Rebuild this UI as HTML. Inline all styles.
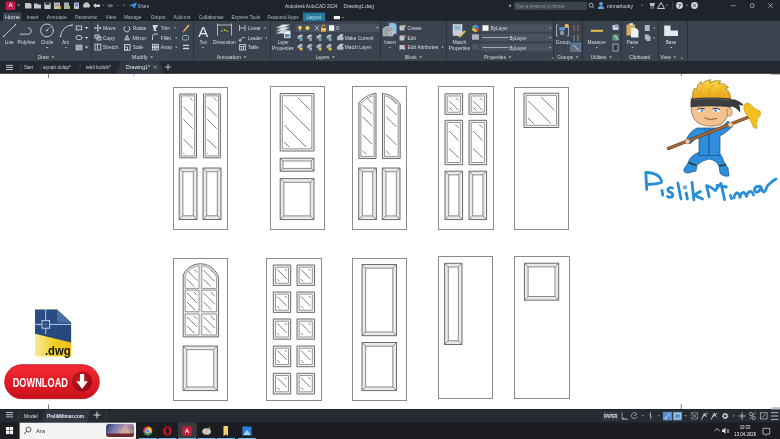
<!DOCTYPE html>
<html><head><meta charset="utf-8">
<style>
html,body{margin:0;padding:0;width:780px;height:439px;overflow:hidden;background:#fff}
svg{display:block;font-family:'Liberation Sans',sans-serif;will-change:transform}
</style></head><body>
<svg width="780" height="439" viewBox="0 0 780 439" style="font-family:'Liberation Sans',sans-serif">
<rect x="0" y="0" width="780" height="21" fill="#1f232a" stroke="none" stroke-width="1" />
<rect x="0" y="21" width="780" height="40" fill="#3b4350" stroke="none" stroke-width="1" />
<rect x="0" y="61" width="780" height="13" fill="#242930" stroke="none" stroke-width="1" />
<rect x="0" y="72" width="780" height="2" fill="#1d2026" stroke="none" stroke-width="1" />
<rect x="0" y="73.8" width="780" height="335.2" fill="#ffffff" stroke="none" stroke-width="1" />
<rect x="0" y="409" width="780" height="14" fill="#262a31" stroke="none" stroke-width="1" />
<rect x="0" y="409" width="780" height="1" fill="#1f232a" stroke="none" stroke-width="1" />
<rect x="0" y="422.5" width="780" height="16.5" fill="#1c1d20" stroke="none" stroke-width="1" />
<rect x="5.6" y="1.3" width="9.8" height="8.7" fill="#c01a4a" stroke="none" stroke-width="1" rx="0.8"/>
<text x="10.6" y="7.4" font-size="6" fill="#f6f0f2" text-anchor="middle" font-weight="bold" >A</text>
<path d="M17.400000000000002 4.48 L19.8 4.48 L18.6 6.04 Z" fill="#c9cdd3"/>
<path d="M25 3 H30 L31.5 4.5 V8.5 H25 Z" fill="#c3c8cf"/>
<path d="M34 3.5 H37 L38 4.5 H41 V8.5 H34 Z" fill="#c3c8cf"/>
<rect x="44.3" y="2.6" width="6.4" height="6.4" fill="#c3c8cf"/><rect x="45.5" y="2.6" width="4" height="2.2" fill="#2a2f36"/>
<rect x="54" y="2.6" width="6" height="6.4" fill="#c3c8cf"/><path d="M55 4.3 H59 M55 5.8 H59" stroke="#555" stroke-width="0.5"/><rect x="58" y="6.5" width="3" height="2.5" fill="#e0b040"/>
<rect x="64" y="2.5" width="5" height="6.5" fill="#a9afb7"/><rect x="66.5" y="6" width="3.5" height="3" fill="#9ac050"/>
<rect x="74" y="2.4" width="5" height="6.6" rx="0.8" fill="#c3c8cf"/><rect x="75" y="3.5" width="3" height="3" fill="#5590d0"/>
<rect x="83.2" y="3.8" width="6.7" height="3.6" rx="1.2" fill="#c3c8cf"/><rect x="84.5" y="2.5" width="4" height="1.8" fill="#c3c8cf"/>
<path d="M93 5.5 L96 3.2 V4.6 H100 V7 H96 V8 Z" fill="#c3c8cf"/>
<path d="M102.2 4.92 L103.8 4.92 L103 5.96 Z" fill="#aab0b8"/>
<path d="M113.5 5.5 L110.5 3.2 V4.6 H107.5 V7 H110.5 V8 Z" fill="#5f6670"/>
<path d="M117.2 4.92 L118.8 4.92 L118 5.96 Z" fill="#6a7078"/>
<path d="M123.0 4.800000000000001 L125.0 4.800000000000001 L124 6.1000000000000005 Z" fill="#aab0b8"/>
<path d="M129 5.5 L137 2.3 L134.5 9 L133 6.5 Z" fill="#3e8fe0"/>
<text x="137.5" y="7.6" font-size="5.8" fill="#a9bcd6" text-anchor="start" font-weight="normal" textLength="11.8" lengthAdjust="spacingAndGlyphs" >Share</text>
<text x="285" y="7.6" font-size="5.6" fill="#d2d5da" text-anchor="start" font-weight="normal" textLength="52.5" lengthAdjust="spacingAndGlyphs" >Autodesk AutoCAD 2024</text>
<text x="343.5" y="7.6" font-size="5.6" fill="#d2d5da" text-anchor="start" font-weight="normal" textLength="30.5" lengthAdjust="spacingAndGlyphs" >Drawing1.dwg</text>
<path d="M509.5 4 L511.5 5.7 L509.5 7.4 Z" fill="#bbb"/>
<rect x="514" y="1.8" width="73" height="8.2" fill="#3c434e" stroke="none" stroke-width="1" />
<text x="515.5" y="7.7" font-size="5.4" fill="#8e959f" text-anchor="start" font-weight="normal" textLength="49" lengthAdjust="spacingAndGlyphs" font-style="italic">Type a keyword or phrase</text>
<circle cx="591" cy="5.2" r="2" fill="none" stroke="#c3c8cf" stroke-width="0.8"/><path d="M592.5 6.7 L594 8.3" stroke="#c3c8cf" stroke-width="0.9"/>
<circle cx="601" cy="3.8" r="1.9" fill="#5fa0e0"/><path d="M597.8 9 A3.2 3 0 0 1 604.2 9 Z" fill="#5fa0e0"/>
<text x="607" y="7.6" font-size="5.6" fill="#d9dde3" text-anchor="start" font-weight="normal" textLength="26" lengthAdjust="spacingAndGlyphs" >mimarlucky</text>
<path d="M641.1 4.76 L642.9 4.76 L642 5.93 Z" fill="#c3c8cf"/>
<path d="M649.5 3 H655 L654 6.5 H650.5 Z" fill="#b9bfc7"/><circle cx="651" cy="8" r="0.7" fill="#b9bfc7"/><circle cx="653.5" cy="8" r="0.7" fill="#b9bfc7"/>
<path d="M661 2.5 L664.5 8.5 H657.5 Z" fill="none" stroke="#c3c8cf" stroke-width="1"/>
<path d="M666.1 4.76 L667.9 4.76 L667 5.93 Z" fill="#c3c8cf"/>
<rect x="672" y="2" width="0.7" height="7.5" fill="#4a5059" stroke="none" stroke-width="1" />
<circle cx="679.5" cy="5.5" r="3.4" fill="#d2d6db"/><text x="679.5" y="7.6" font-size="5" fill="#2a2e35" text-anchor="middle" font-weight="bold">?</text>
<path d="M686.1 4.76 L687.9 4.76 L687 5.93 Z" fill="#c3c8cf"/>
<circle cx="694.5" cy="5.5" r="3.4" fill="#d2d6db"/><rect x="693" y="4" width="3" height="3" fill="#8a9099"/>
<line x1="731" y1="5.7" x2="735.8" y2="5.7" stroke="#c9cdd3" stroke-width="0.6" />
<rect x="750.5" y="3.8" width="3.4" height="3.6" fill="none" stroke="#c9cdd3" stroke-width="0.7" rx="0.8"/>
<path d="M768.3 3.3 L772.9 7.9 M772.9 3.3 L768.3 7.9" stroke="#c9cdd3" stroke-width="0.65"/>
<path d="M3 21 V13 Q3 12.5 3.5 12.5 H21 Q21.5 12.5 21.5 13 V21 Z" fill="#3b4350"/>
<text x="5" y="19.1" font-size="5.8" fill="#e6e9ed" text-anchor="start" font-weight="normal" textLength="15" lengthAdjust="spacingAndGlyphs" >Home</text>
<text x="26.7" y="19.1" font-size="5.8" fill="#b6bcc4" text-anchor="start" font-weight="normal" textLength="11.9" lengthAdjust="spacingAndGlyphs" >Insert</text>
<text x="46.8" y="19.1" font-size="5.8" fill="#b6bcc4" text-anchor="start" font-weight="normal" textLength="19.9" lengthAdjust="spacingAndGlyphs" >Annotate</text>
<text x="74.9" y="19.1" font-size="5.8" fill="#b6bcc4" text-anchor="start" font-weight="normal" textLength="22.5" lengthAdjust="spacingAndGlyphs" >Parametric</text>
<text x="105.6" y="19.1" font-size="5.8" fill="#b6bcc4" text-anchor="start" font-weight="normal" textLength="10.3" lengthAdjust="spacingAndGlyphs" >View</text>
<text x="124" y="19.1" font-size="5.8" fill="#b6bcc4" text-anchor="start" font-weight="normal" textLength="17.5" lengthAdjust="spacingAndGlyphs" >Manage</text>
<text x="150.8" y="19.1" font-size="5.8" fill="#b6bcc4" text-anchor="start" font-weight="normal" textLength="14.7" lengthAdjust="spacingAndGlyphs" >Output</text>
<text x="173.6" y="19.1" font-size="5.8" fill="#b6bcc4" text-anchor="start" font-weight="normal" textLength="16.9" lengthAdjust="spacingAndGlyphs" >Add-ins</text>
<text x="198.7" y="19.1" font-size="5.8" fill="#b6bcc4" text-anchor="start" font-weight="normal" textLength="25.1" lengthAdjust="spacingAndGlyphs" >Collaborate</text>
<text x="231.5" y="19.1" font-size="5.8" fill="#b6bcc4" text-anchor="start" font-weight="normal" textLength="28.8" lengthAdjust="spacingAndGlyphs" >Express Tools</text>
<text x="267.4" y="19.1" font-size="5.8" fill="#b6bcc4" text-anchor="start" font-weight="normal" textLength="31.3" lengthAdjust="spacingAndGlyphs" >Featured Apps</text>
<rect x="303" y="12.8" width="22" height="8.2" fill="#2a7aa0" stroke="#1d5f80" stroke-width="0.6" />
<text x="306.7" y="19.1" font-size="5.8" fill="#cde6f2" text-anchor="start" font-weight="normal" textLength="14.3" lengthAdjust="spacingAndGlyphs" >Layout</text>
<rect x="333.8" y="16" width="6.2" height="3.2" fill="#f0f2f4" stroke="none" stroke-width="1" />
<path d="M342.1 17.060000000000002 L343.9 17.060000000000002 L343 18.23 Z" fill="#c3c8cf"/>
<path d="M6 65.4 H13 M6 67.4 H13 M6 69.5 H13" stroke="#d0d4da" stroke-width="0.9"/>
<path d="M117 73 L121.5 61.2 H160 L163 73 Z" fill="#333944"/>
<line x1="22" y1="63.5" x2="20" y2="71" stroke="#4a515b" stroke-width="0.6" />
<line x1="42" y1="63.5" x2="40" y2="71" stroke="#4a515b" stroke-width="0.6" />
<line x1="81" y1="63.5" x2="79" y2="71" stroke="#4a515b" stroke-width="0.6" />
<text x="24" y="69.3" font-size="5.6" fill="#cdd1d7" text-anchor="start" font-weight="normal" textLength="9" lengthAdjust="spacingAndGlyphs" >Start</text>
<text x="43" y="69.3" font-size="5.6" fill="#cdd1d7" text-anchor="start" font-weight="normal" textLength="28" lengthAdjust="spacingAndGlyphs" >aynalı dolap*</text>
<text x="86" y="69.3" font-size="5.6" fill="#cdd1d7" text-anchor="start" font-weight="normal" textLength="25" lengthAdjust="spacingAndGlyphs" >tekli koltuk*</text>
<text x="126" y="69.3" font-size="5.6" fill="#e8ebef" text-anchor="start" font-weight="normal" textLength="24" lengthAdjust="spacingAndGlyphs" >Drawing1*</text>
<path d="M153.5 65.5 L157 69 M157 65.5 L153.5 69" stroke="#aab0b8" stroke-width="0.7"/>
<path d="M168 63.8 V70.2 M164.8 67 H171.2" stroke="#d8dce1" stroke-width="0.8"/>
<rect x="91" y="21" width="1" height="40" fill="#2b3039" stroke="none" stroke-width="1" />
<rect x="193" y="21" width="1" height="40" fill="#2b3039" stroke="none" stroke-width="1" />
<rect x="270" y="21" width="1" height="40" fill="#2b3039" stroke="none" stroke-width="1" />
<rect x="380" y="21" width="1" height="40" fill="#2b3039" stroke="none" stroke-width="1" />
<rect x="446" y="21" width="1" height="40" fill="#2b3039" stroke="none" stroke-width="1" />
<rect x="553" y="21" width="1" height="40" fill="#2b3039" stroke="none" stroke-width="1" />
<rect x="582" y="21" width="1" height="40" fill="#2b3039" stroke="none" stroke-width="1" />
<rect x="621" y="21" width="1" height="40" fill="#2b3039" stroke="none" stroke-width="1" />
<rect x="658" y="21" width="1" height="40" fill="#2b3039" stroke="none" stroke-width="1" />
<rect x="687" y="21" width="1" height="40" fill="#2b3039" stroke="none" stroke-width="1" />
<g stroke="#cfd4da" stroke-width="0.9" fill="none" stroke-linecap="round">
<line x1="3.5" y1="36.5" x2="15.5" y2="24.8"/>
<path d="M20 34.2 L29 34.2 A3.3 3.3 0 0 0 28.5 27.8"/>
<circle cx="47" cy="30.4" r="6.4"/>
<path d="M60.5 36.5 A12 12 0 0 1 72 25"/>
<rect x="76.2" y="26" width="5.4" height="3.8"/>
<ellipse cx="79" cy="37.6" rx="3" ry="2.2"/>
</g>
<line x1="47" y1="30.4" x2="50.6" y2="26.8" stroke="#7fb0d8" stroke-width="0.9"/>
<circle cx="3.5" cy="36.5" r="0.8" fill="#cfd4da"/>
<circle cx="15.5" cy="24.8" r="0.8" fill="#cfd4da"/>
<circle cx="60.5" cy="36.5" r="0.8" fill="#cfd4da"/>
<circle cx="72" cy="25" r="0.8" fill="#cfd4da"/>
<circle cx="47" cy="30.4" r="0.8" fill="#cfd4da"/>
<rect x="76" y="45" width="6" height="5" fill="#9aa2ac" stroke="#cfd4da" stroke-width="0.6" />
<path d="M84.9 27.04 L88.1 27.04 L86.5 29.12 Z" fill="#d9dde3"/>
<path d="M84.9 37.04 L88.1 37.04 L86.5 39.12 Z" fill="#d9dde3"/>
<path d="M84.9 46.54 L88.1 46.54 L86.5 48.62 Z" fill="#d9dde3"/>
<text x="4.7" y="44.216" font-size="5.6" fill="#d9dde3" text-anchor="start" font-weight="normal" textLength="9.0" lengthAdjust="spacingAndGlyphs" >Line</text>
<text x="17.5" y="44.216" font-size="5.6" fill="#d9dde3" text-anchor="start" font-weight="normal" textLength="17.8" lengthAdjust="spacingAndGlyphs" >Polyline</text>
<text x="40.8" y="44.216" font-size="5.6" fill="#d9dde3" text-anchor="start" font-weight="normal" textLength="12.5" lengthAdjust="spacingAndGlyphs" >Circle</text>
<text x="62" y="44.216" font-size="5.6" fill="#d9dde3" text-anchor="start" font-weight="normal" textLength="7.2" lengthAdjust="spacingAndGlyphs" >Arc</text>
<path d="M46.0 46.9 L48.0 46.9 L47 48.2 Z" fill="#d9dde3"/>
<path d="M65.0 46.9 L67.0 46.9 L66 48.2 Z" fill="#d9dde3"/>
<text x="38" y="59.216" font-size="5.6" fill="#d9dde3" text-anchor="start" font-weight="normal" textLength="10.7" lengthAdjust="spacingAndGlyphs" >Draw</text>
<path d="M51.7 56.42 L54.3 56.42 L53 58.11 Z" fill="#d9dde3"/>
<g stroke="#cfd4da" stroke-width="0.9" fill="none">
<path d="M97.8 25 V31 M94.8 28 H100.8"/>
<path d="M97.8 24.3 L96.6 25.8 H99 Z M97.8 31.7 L96.6 30.2 H99 Z M94.1 28 L95.6 26.8 V29.2 Z M101.5 28 L100 26.8 V29.2 Z" fill="#cfd4da" stroke="none"/>
<rect x="95" y="35" width="4" height="3"/><rect x="97" y="37" width="4" height="3"/>
<rect x="95" y="44.2" width="5.8" height="5.8"/><line x1="97.5" y1="44.5" x2="97.5" y2="49"/>
<path d="M128.5 26.3 A3 3 0 1 1 125 26.5"/>
<rect x="124.5" y="44.5" width="5.6" height="5.6"/><rect x="124.5" y="47" width="3" height="3"/>
<path d="M152.5 40 V36.5 A2.5 2.5 0 0 1 155 34 H158"/>
<rect x="152.5" y="44.3" width="2.4" height="2.4"/><rect x="156" y="44.3" width="2.4" height="2.4"/><rect x="152.5" y="47.5" width="2.4" height="2.4"/><rect x="156" y="47.5" width="2.4" height="2.4"/>
</g>
<path d="M124.5 40 L127 35 L129.5 40 Z" fill="#6d9fc4" stroke="#cfd4da" stroke-width="0.6"/>
<path d="M152.5 25 L158.5 25 L155.5 29 L157 31 L154 31 Z" fill="#cfd4da"/>
<path d="M183 32 L189 25" stroke="#e8b86a" stroke-width="1.6"/><path d="M183 32 L184.3 30.5" stroke="#d05050" stroke-width="1.6"/>
<rect x="182.5" y="35.5" width="6" height="4.5" rx="1.2" fill="none" stroke="#8fb0b8" stroke-width="1"/>
<path d="M183.5 45.3 H188.5 M183.5 48.5 H188.5" stroke="#cfd4da" stroke-width="1.3" stroke-linecap="round"/>
<text x="103" y="30.016" font-size="5.6" fill="#d9dde3" text-anchor="start" font-weight="normal" textLength="12.5" lengthAdjust="spacingAndGlyphs" >Move</text>
<text x="102.8" y="40.016" font-size="5.6" fill="#d9dde3" text-anchor="start" font-weight="normal" textLength="11.9" lengthAdjust="spacingAndGlyphs" >Copy</text>
<text x="102.8" y="49.416" font-size="5.6" fill="#d9dde3" text-anchor="start" font-weight="normal" textLength="15.5" lengthAdjust="spacingAndGlyphs" >Stretch</text>
<text x="133" y="30.016" font-size="5.6" fill="#d9dde3" text-anchor="start" font-weight="normal" textLength="13.3" lengthAdjust="spacingAndGlyphs" >Rotate</text>
<text x="132.5" y="40.016" font-size="5.6" fill="#d9dde3" text-anchor="start" font-weight="normal" textLength="13.8" lengthAdjust="spacingAndGlyphs" >Mirror</text>
<text x="133" y="49.416" font-size="5.6" fill="#d9dde3" text-anchor="start" font-weight="normal" textLength="10.3" lengthAdjust="spacingAndGlyphs" >Scale</text>
<text x="160.8" y="30.016" font-size="5.6" fill="#d9dde3" text-anchor="start" font-weight="normal" textLength="9.2" lengthAdjust="spacingAndGlyphs" >Trim</text>
<text x="160.8" y="40.016" font-size="5.6" fill="#d9dde3" text-anchor="start" font-weight="normal" textLength="10.0" lengthAdjust="spacingAndGlyphs" >Fillet</text>
<text x="160.8" y="49.416" font-size="5.6" fill="#d9dde3" text-anchor="start" font-weight="normal" textLength="11.2" lengthAdjust="spacingAndGlyphs" >Array</text>
<path d="M174.0 27.4 L176.0 27.4 L175 28.7 Z" fill="#d9dde3"/>
<path d="M175.3 37.4 L177.3 37.4 L176.3 38.7 Z" fill="#d9dde3"/>
<path d="M175.3 46.8 L177.3 46.8 L176.3 48.1 Z" fill="#d9dde3"/>
<text x="132" y="59.216" font-size="5.6" fill="#d9dde3" text-anchor="start" font-weight="normal" textLength="15.5" lengthAdjust="spacingAndGlyphs" >Modify</text>
<path d="M150.39999999999998 56.42 L153.0 56.42 L151.7 58.11 Z" fill="#d9dde3"/>
<text x="203.3" y="37" font-size="15" fill="#e6e9ed" text-anchor="middle" font-weight="normal" textLength="10" lengthAdjust="spacingAndGlyphs" >A</text>
<text x="199.7" y="44.216" font-size="5.6" fill="#d9dde3" text-anchor="start" font-weight="normal" textLength="7.0" lengthAdjust="spacingAndGlyphs" >Text</text>
<path d="M202.0 46.9 L204.0 46.9 L203 48.2 Z" fill="#d9dde3"/>
<g stroke="#cfd4da" stroke-width="0.8" fill="none"><path d="M217.5 23.5 V35.5 M231.5 23.5 V35.5 M217.5 25 H231.5"/></g>
<path d="M221 32 L223 30 M224.5 29 V31 M228 32 L226 30" stroke="#e0d040" stroke-width="0.9"/>
<text x="213" y="44.216" font-size="5.6" fill="#d9dde3" text-anchor="start" font-weight="normal" textLength="22.8" lengthAdjust="spacingAndGlyphs" >Dimension</text>
<g stroke="#cfd4da" stroke-width="0.8" fill="none"><path d="M239.5 25 V31 M245 25 V31 M239.5 28 H245"/><path d="M239.5 41 L242.5 37.5 H245"/><circle cx="240" cy="40.5" r="1"/><rect x="239.5" y="44.5" width="6" height="5.5"/><path d="M239.5 46.3 H245.5 M241.5 46.3 V50 M243.5 46.3 V50"/></g>
<text x="248" y="30.016" font-size="5.6" fill="#d9dde3" text-anchor="start" font-weight="normal" textLength="12.8" lengthAdjust="spacingAndGlyphs" >Linear</text>
<text x="248" y="40.016" font-size="5.6" fill="#d9dde3" text-anchor="start" font-weight="normal" textLength="14" lengthAdjust="spacingAndGlyphs" >Leader</text>
<text x="248" y="49.416" font-size="5.6" fill="#d9dde3" text-anchor="start" font-weight="normal" textLength="10.8" lengthAdjust="spacingAndGlyphs" >Table</text>
<path d="M264.0 27.4 L266.0 27.4 L265 28.7 Z" fill="#d9dde3"/>
<path d="M265.3 37.4 L267.3 37.4 L266.3 38.7 Z" fill="#d9dde3"/>
<text x="216.7" y="59.216" font-size="5.6" fill="#d9dde3" text-anchor="start" font-weight="normal" textLength="24.1" lengthAdjust="spacingAndGlyphs" >Annotation</text>
<path d="M243.7 56.42 L246.3 56.42 L245 58.11 Z" fill="#d9dde3"/>
<g stroke="#8a939d" stroke-width="0.5">
<path d="M276 28.0 L282.5 24.5 L290 24.5 L283.5 28.0 Z" fill="#e4e8ec"/>
<path d="M276 30.8 L282.5 27.3 L290 27.3 L283.5 30.8 Z" fill="#e4e8ec"/>
<path d="M276 33.6 L282.5 30.1 L290 30.1 L283.5 33.6 Z" fill="#e4e8ec"/>
</g>
<rect x="284" y="31" width="6.5" height="7" fill="#eef1f4" stroke="#7f8a96" stroke-width="0.5" />
<rect x="285" y="34.2" width="4.5" height="2.8" fill="#4a86c0" stroke="none" stroke-width="1" />
<text x="277.8" y="44.216" font-size="5.6" fill="#d9dde3" text-anchor="start" font-weight="normal" textLength="10.9" lengthAdjust="spacingAndGlyphs" >Layer</text>
<text x="272" y="50.315999999999995" font-size="5.6" fill="#d9dde3" text-anchor="start" font-weight="normal" textLength="21.7" lengthAdjust="spacingAndGlyphs" >Properties</text>
<rect x="295.8" y="24" width="83.5" height="8" fill="#4a525f" stroke="none" stroke-width="1" />
<circle cx="300" cy="27.5" r="1.8" fill="#f0d050"/><rect x="299.2" y="29" width="1.6" height="1.6" fill="#c0c0b0"/>
<circle cx="307.5" cy="28" r="2" fill="#f3d55a"/>
<path d="M315 25.5 L319 30.5 M319 25.5 L315 30.5" stroke="#b9c0c8" stroke-width="0.9"/>
<rect x="321" y="28" width="5" height="3.6" fill="#f0c040" stroke="none" stroke-width="1" />
<path d="M322 28 V26.5 A1.5 1.5 0 0 1 325 26.5" stroke="#f0c040" stroke-width="0.8" fill="none"/>
<rect x="329" y="25.3" width="5.2" height="5.5" fill="#f4f6f8" stroke="none" stroke-width="1" />
<text x="336" y="30.2" font-size="5.6" fill="#d9dde3" text-anchor="start" font-weight="normal" >0</text>
<path d="M376.4 27.34 L378.6 27.34 L377.5 28.77 Z" fill="#d9dde3"/>
<path d="M296.8 37.0 L300.3 34.5 L303.2 35.0 L299.7 37.5 Z" fill="#c5ccd4"/>
<path d="M296.8 38.5 L300.3 36.0 L303.2 36.5 L299.7 39.0 Z" fill="#9aa4ae"/>
<rect x="299.7" y="38.1" width="2.8" height="2.8" fill="#5fb0b8"/>
<path d="M306.3 37.0 L309.8 34.5 L312.7 35.0 L309.2 37.5 Z" fill="#c5ccd4"/>
<path d="M306.3 38.5 L309.8 36.0 L312.7 36.5 L309.2 39.0 Z" fill="#9aa4ae"/>
<rect x="309.2" y="38.1" width="2.8" height="2.8" fill="#8fa0b0"/>
<path d="M315.8 37.0 L319.3 34.5 L322.2 35.0 L318.7 37.5 Z" fill="#c5ccd4"/>
<path d="M315.8 38.5 L319.3 36.0 L322.2 36.5 L318.7 39.0 Z" fill="#9aa4ae"/>
<rect x="318.7" y="38.1" width="2.8" height="2.8" fill="#5fb0a0"/>
<path d="M325.8 37.0 L329.3 34.5 L332.2 35.0 L328.7 37.5 Z" fill="#c5ccd4"/>
<path d="M325.8 38.5 L329.3 36.0 L332.2 36.5 L328.7 39.0 Z" fill="#9aa4ae"/>
<rect x="328.7" y="38.1" width="2.8" height="2.8" fill="#70b8c0"/>
<path d="M337 37.0 L341 34.0 L344 34.7 L340 38.0 Z" fill="#c5ccd4"/>
<rect x="337" y="36.7" width="6.5" height="3.6" rx="0.8" fill="#b0b8c2"/>
<path d="M296.8 46.5 L300.3 44 L303.2 44.5 L299.7 47 Z" fill="#c5ccd4"/>
<path d="M296.8 48 L300.3 45.5 L303.2 46 L299.7 48.5 Z" fill="#9aa4ae"/>
<rect x="299.7" y="47.6" width="2.8" height="2.8" fill="#f0c050"/>
<path d="M306.3 46.5 L309.8 44 L312.7 44.5 L309.2 47 Z" fill="#c5ccd4"/>
<path d="M306.3 48 L309.8 45.5 L312.7 46 L309.2 48.5 Z" fill="#9aa4ae"/>
<rect x="309.2" y="47.6" width="2.8" height="2.8" fill="#9aa6b2"/>
<path d="M315.8 46.5 L319.3 44 L322.2 44.5 L318.7 47 Z" fill="#c5ccd4"/>
<path d="M315.8 48 L319.3 45.5 L322.2 46 L318.7 48.5 Z" fill="#9aa4ae"/>
<rect x="318.7" y="47.6" width="2.8" height="2.8" fill="#e0c050"/>
<path d="M325.8 46.5 L329.3 44 L332.2 44.5 L328.7 47 Z" fill="#c5ccd4"/>
<path d="M325.8 48 L329.3 45.5 L332.2 46 L328.7 48.5 Z" fill="#9aa4ae"/>
<rect x="328.7" y="47.6" width="2.8" height="2.8" fill="#f0c040"/>
<path d="M337 46.5 L341 43.5 L344 44.2 L340 47.5 Z" fill="#c5ccd4"/>
<rect x="337" y="46.2" width="6.5" height="3.6" rx="0.8" fill="#b0b8c2"/>
<text x="344.7" y="40.016" font-size="5.6" fill="#d9dde3" text-anchor="start" font-weight="normal" textLength="29.0" lengthAdjust="spacingAndGlyphs" >Make Current</text>
<text x="344.7" y="49.416" font-size="5.6" fill="#d9dde3" text-anchor="start" font-weight="normal" textLength="26.6" lengthAdjust="spacingAndGlyphs" >Match Layer</text>
<text x="315.8" y="59.216" font-size="5.6" fill="#d9dde3" text-anchor="start" font-weight="normal" textLength="13.4" lengthAdjust="spacingAndGlyphs" >Layers</text>
<path d="M332.0 56.42 L334.6 56.42 L333.3 58.11 Z" fill="#d9dde3"/>
<path d="M389 23 L394.5 23 L396.5 25 V34 H389 Z" fill="#8cc0e8" stroke="#5a90c0" stroke-width="0.4"/>
<path d="M383 28.5 L386 26.5 H393 V36 H383 Z" fill="#9aa2ac" stroke="#d0d5db" stroke-width="0.5"/>
<circle cx="391" cy="33.5" r="2" fill="none" stroke="#e6e9ec" stroke-width="0.6"/>
<text x="384.2" y="44.216" font-size="5.6" fill="#d9dde3" text-anchor="start" font-weight="normal" textLength="11.6" lengthAdjust="spacingAndGlyphs" >Insert</text>
<path d="M389.0 46.9 L391.0 46.9 L390 48.2 Z" fill="#d9dde3"/>
<g fill="#c0c7cf"><rect x="399.5" y="25.5" width="5" height="5" rx="1"/><rect x="399.5" y="35.5" width="5" height="5" rx="1"/><path d="M399.5 45 L405 45 L405 50 L402 49 L399.5 50 Z"/></g>
<circle cx="404.5" cy="26" r="1.3" fill="#e0a060"/><circle cx="404.5" cy="36" r="1.3" fill="#d07060"/><circle cx="404" cy="46" r="1.3" fill="#e08080"/>
<text x="407.5" y="30.016" font-size="5.6" fill="#d9dde3" text-anchor="start" font-weight="normal" textLength="14.2" lengthAdjust="spacingAndGlyphs" >Create</text>
<text x="407.5" y="40.016" font-size="5.6" fill="#d9dde3" text-anchor="start" font-weight="normal" textLength="8.3" lengthAdjust="spacingAndGlyphs" >Edit</text>
<text x="407.5" y="49.416" font-size="5.6" fill="#d9dde3" text-anchor="start" font-weight="normal" textLength="30.8" lengthAdjust="spacingAndGlyphs" >Edit Attributes</text>
<path d="M441.5 46.8 L443.5 46.8 L442.5 48.1 Z" fill="#d9dde3"/>
<text x="405" y="59.216" font-size="5.6" fill="#d9dde3" text-anchor="start" font-weight="normal" textLength="11.7" lengthAdjust="spacingAndGlyphs" >Block</text>
<path d="M419.5 56.42 L422.1 56.42 L420.8 58.11 Z" fill="#d9dde3"/>
<rect x="453" y="24.5" width="9" height="11" fill="#c9ced4" stroke="#e6e9ec" stroke-width="0.5" />
<rect x="454.5" y="26" width="6" height="4" fill="#8ab4d8" stroke="none" stroke-width="1" />
<path d="M459 37 L465 31" stroke="#e8c060" stroke-width="2"/>
<text x="452.5" y="44.216" font-size="5.6" fill="#d9dde3" text-anchor="start" font-weight="normal" textLength="13.8" lengthAdjust="spacingAndGlyphs" >Match</text>
<text x="448.7" y="50.315999999999995" font-size="5.6" fill="#d9dde3" text-anchor="start" font-weight="normal" textLength="21.3" lengthAdjust="spacingAndGlyphs" >Properties</text>
<g>
<path d="M475.6 28.4 L479.20 28.40 A3.6 3.6 0 0 1 477.40 31.52 Z" fill="#e84a4a"/>
<path d="M475.6 28.4 L477.40 31.52 A3.6 3.6 0 0 1 473.80 31.52 Z" fill="#f0a030"/>
<path d="M475.6 28.4 L473.80 31.52 A3.6 3.6 0 0 1 472.00 28.40 Z" fill="#f0e040"/>
<path d="M475.6 28.4 L472.00 28.40 A3.6 3.6 0 0 1 473.80 25.28 Z" fill="#50c050"/>
<path d="M475.6 28.4 L473.80 25.28 A3.6 3.6 0 0 1 477.40 25.28 Z" fill="#40a0e0"/>
<path d="M475.6 28.4 L477.40 25.28 A3.6 3.6 0 0 1 479.20 28.40 Z" fill="#8060d0"/>
</g>
<rect x="480.8" y="24.3" width="72" height="7.5" fill="#4a525f" stroke="none" stroke-width="1" />
<path d="M549.3 27.5 L551.3 27.5 L550.3 28.8 Z" fill="#d9dde3"/>
<rect x="480.8" y="33.8" width="72" height="7.5" fill="#4a525f" stroke="none" stroke-width="1" />
<path d="M549.3 36.99999999999999 L551.3 36.99999999999999 L550.3 38.3 Z" fill="#d9dde3"/>
<rect x="480.8" y="43.8" width="72" height="7.5" fill="#4a525f" stroke="none" stroke-width="1" />
<path d="M549.3 46.99999999999999 L551.3 46.99999999999999 L550.3 48.3 Z" fill="#d9dde3"/>
<rect x="482.5" y="25.3" width="6" height="5.5" fill="#f4f6f8" stroke="none" stroke-width="1" />
<text x="490.8" y="30.2" font-size="5.6" fill="#d9dde3" text-anchor="start" font-weight="normal" textLength="16.7" lengthAdjust="spacingAndGlyphs" >ByLayer</text>
<rect x="472" y="34.3" width="7" height="5.5" fill="#a9b0b9" stroke="none" stroke-width="1" />
<path d="M472.5 45 H479 M472.5 47 H479 M472.5 49 H479" stroke="#8a929c" stroke-width="0.8" stroke-dasharray="1 0.7"/>
<line x1="482.5" y1="37.5" x2="508.3" y2="37.5" stroke="#cfd4da" stroke-width="0.7" />
<text x="509.5" y="39.5" font-size="5.6" fill="#d9dde3" text-anchor="start" font-weight="normal" textLength="16.7" lengthAdjust="spacingAndGlyphs" >ByLayer</text>
<line x1="482.5" y1="47.5" x2="508.3" y2="47.5" stroke="#cfd4da" stroke-width="0.7" />
<text x="509.5" y="49.5" font-size="5.6" fill="#d9dde3" text-anchor="start" font-weight="normal" textLength="16.7" lengthAdjust="spacingAndGlyphs" >ByLayer</text>
<text x="484.2" y="59.216" font-size="5.6" fill="#d9dde3" text-anchor="start" font-weight="normal" textLength="21.6" lengthAdjust="spacingAndGlyphs" >Properties</text>
<path d="M508.7 56.42 L511.3 56.42 L510 58.11 Z" fill="#d9dde3"/>
<text x="551" y="59" font-size="4" fill="#aab" text-anchor="start" font-weight="normal" >↘</text>
<path d="M556.5 25 V36 M558 25 H556.5 M558 36 H556.5 M567 25 H568.5 V36 H567" stroke="#cfd4da" stroke-width="0.7" fill="none"/>
<rect x="559" y="27" width="6" height="3.5" rx="1" fill="#5d8fc8"/><circle cx="562" cy="33" r="2.2" fill="#8e98a3"/>
<circle cx="566.5" cy="26" r="2" fill="#f0c040"/>
<text x="555.8" y="44.216" font-size="5.6" fill="#d9dde3" text-anchor="start" font-weight="normal" textLength="14.2" lengthAdjust="spacingAndGlyphs" >Group</text>
<g stroke="#d07070" stroke-width="0.8" fill="none"><path d="M574 25 V31 M578 25 V31"/><path d="M574 35 V41" stroke="#8ab"/><path d="M578 35 V41" stroke="#e0a050"/></g>
<rect x="570.8" y="43" width="10" height="8.3" fill="#5b6f86" stroke="#7aa0c8" stroke-width="0.5" />
<path d="M573.5 45 L578.5 50" stroke="#e6e9ec" stroke-width="0.9"/>
<text x="557.2" y="59.216" font-size="5.6" fill="#d9dde3" text-anchor="start" font-weight="normal" textLength="15.8" lengthAdjust="spacingAndGlyphs" >Groups</text>
<path d="M575.7 56.42 L578.3 56.42 L577 58.11 Z" fill="#d9dde3"/>
<rect x="590.8" y="29.8" width="12.2" height="2" fill="#e6c050" stroke="none" stroke-width="1" />
<text x="587.5" y="44.216" font-size="5.6" fill="#d9dde3" text-anchor="start" font-weight="normal" textLength="18.3" lengthAdjust="spacingAndGlyphs" >Measure</text>
<path d="M595.7 46.9 L597.7 46.9 L596.7 48.2 Z" fill="#d9dde3"/>
<rect x="612.5" y="25" width="6" height="5" fill="#c9d1d9"/><rect x="615" y="24" width="3" height="3" fill="#5a9ad0"/>
<rect x="612.5" y="34.5" width="6" height="6" fill="#5f9f7f"/><path d="M615 36 L618.5 40" stroke="#eef" stroke-width="0.9"/>
<rect x="613" y="44" width="5" height="7" fill="#2f3540" stroke="#cfd4da" stroke-width="0.7" />
<text x="590.8" y="59.216" font-size="5.6" fill="#d9dde3" text-anchor="start" font-weight="normal" textLength="15.5" lengthAdjust="spacingAndGlyphs" >Utilities</text>
<path d="M609.2 56.42 L611.8 56.42 L610.5 58.11 Z" fill="#d9dde3"/>
<rect x="626.5" y="24.5" width="8.5" height="11" fill="#d9a86b" stroke="none" stroke-width="1" />
<rect x="629.5" y="23.2" width="3.5" height="2" fill="#e8e8e8" stroke="none" stroke-width="1" />
<path d="M631 28 H636 L638.5 30.5 V37.5 H631 Z" fill="#f0f2f4"/>
<text x="626.7" y="44.216" font-size="5.6" fill="#d9dde3" text-anchor="start" font-weight="normal" textLength="11.6" lengthAdjust="spacingAndGlyphs" >Paste</text>
<path d="M631.5 46.9 L633.5 46.9 L632.5 48.2 Z" fill="#d9dde3"/>
<g fill="#aeb6bf"><rect x="644.8" y="25" width="5" height="6"/><rect x="644.8" y="34.5" width="4" height="5"/><rect x="646.5" y="36" width="4" height="5"/></g>
<path d="M653.2 27.4 L655.2 27.4 L654.2 28.7 Z" fill="#d9dde3"/>
<path d="M653.2 37.4 L655.2 37.4 L654.2 38.7 Z" fill="#d9dde3"/>
<text x="629.2" y="59.216" font-size="5.6" fill="#d9dde3" text-anchor="start" font-weight="normal" textLength="21.1" lengthAdjust="spacingAndGlyphs" >Clipboard</text>
<path d="M664.2 25.5 H670.5 V30.5 H678 V36 H664.2 Z" fill="#e6e9ec"/>
<text x="665.8" y="44.216" font-size="5.6" fill="#d9dde3" text-anchor="start" font-weight="normal" textLength="10.5" lengthAdjust="spacingAndGlyphs" >Base</text>
<path d="M670.3 46.9 L672.3 46.9 L671.3 48.2 Z" fill="#d9dde3"/>
<text x="660.3" y="59.216" font-size="5.6" fill="#d9dde3" text-anchor="start" font-weight="normal" textLength="10.5" lengthAdjust="spacingAndGlyphs" >View</text>
<path d="M673.4000000000001 56.42 L676.0 56.42 L674.7 58.11 Z" fill="#d9dde3"/>
<text x="679.5" y="59" font-size="4" fill="#aab" text-anchor="start" font-weight="normal" >↘</text>
<rect x="173.5" y="87.5" width="54.0" height="142.0" fill="none" stroke="#8a8a8a" stroke-width="1" />
<path d="M179.7 94 H196.5 V157.8 H179.7 Z" fill="#f0f0f0" stroke="#5c5c5c" stroke-width="0.9"/>
<path d="M181.6 95.9 H194.6 V155.9 H181.6 Z" fill="#ffffff" stroke="#707070" stroke-width="0.7"/>
<clipPath id="c1"><path d="M181.6 95.9 H194.6 V155.9 H181.6 Z"/></clipPath>
<g clip-path="url(#c1)" stroke="#5a5a5a" stroke-width="0.8">
<line x1="189.80" y1="97.70" x2="192.80" y2="100.70"/>
<line x1="183.40" y1="106.70" x2="192.80" y2="116.10"/>
<line x1="183.40" y1="119.30" x2="192.80" y2="128.70"/>
<line x1="183.40" y1="139.00" x2="192.80" y2="148.40"/>
<line x1="183.40" y1="153.00" x2="184.50" y2="154.10"/>
</g>
<path d="M203.5 94 H220.4 V157.8 H203.5 Z" fill="#f0f0f0" stroke="#5c5c5c" stroke-width="0.9"/>
<path d="M205.4 95.9 H218.5 V155.9 H205.4 Z" fill="#ffffff" stroke="#707070" stroke-width="0.7"/>
<clipPath id="c2"><path d="M205.4 95.9 H218.5 V155.9 H205.4 Z"/></clipPath>
<g clip-path="url(#c2)" stroke="#5a5a5a" stroke-width="0.8">
<line x1="213.60" y1="97.70" x2="216.70" y2="100.80"/>
<line x1="207.20" y1="106.70" x2="216.70" y2="116.20"/>
<line x1="207.20" y1="119.30" x2="216.70" y2="128.80"/>
<line x1="207.20" y1="139.00" x2="216.70" y2="148.50"/>
<line x1="207.20" y1="153.00" x2="208.30" y2="154.10"/>
</g>
<path d="M179.2 168 H197 V219.5 H179.2 Z" fill="#eaeaea" stroke="#5c5c5c" stroke-width="0.9"/>
<path d="M182.89999999999998 171.7 H193.3 V215.8 H182.89999999999998 Z" fill="#ffffff" stroke="#707070" stroke-width="0.8"/>
<line x1="179.2" y1="168" x2="182.89999999999998" y2="171.7" stroke="#5c5c5c" stroke-width="0.7" />
<line x1="197" y1="168" x2="193.3" y2="171.7" stroke="#5c5c5c" stroke-width="0.7" />
<line x1="179.2" y1="219.5" x2="182.89999999999998" y2="215.8" stroke="#5c5c5c" stroke-width="0.7" />
<line x1="197" y1="219.5" x2="193.3" y2="215.8" stroke="#5c5c5c" stroke-width="0.7" />
<path d="M203 168 H221 V219.5 H203 Z" fill="#eaeaea" stroke="#5c5c5c" stroke-width="0.9"/>
<path d="M206.7 171.7 H217.3 V215.8 H206.7 Z" fill="#ffffff" stroke="#707070" stroke-width="0.8"/>
<line x1="203" y1="168" x2="206.7" y2="171.7" stroke="#5c5c5c" stroke-width="0.7" />
<line x1="221" y1="168" x2="217.3" y2="171.7" stroke="#5c5c5c" stroke-width="0.7" />
<line x1="203" y1="219.5" x2="206.7" y2="215.8" stroke="#5c5c5c" stroke-width="0.7" />
<line x1="221" y1="219.5" x2="217.3" y2="215.8" stroke="#5c5c5c" stroke-width="0.7" />
<rect x="270.5" y="86.5" width="54.0" height="143.0" fill="none" stroke="#8a8a8a" stroke-width="1" />
<path d="M280.2 93.5 H314 V151 H280.2 Z" fill="#f0f0f0" stroke="#5c5c5c" stroke-width="0.9"/>
<path d="M282.4 95.7 H311.8 V148.8 H282.4 Z" fill="#ffffff" stroke="#707070" stroke-width="0.7"/>
<clipPath id="c3"><path d="M282.4 95.7 H311.8 V148.8 H282.4 Z"/></clipPath>
<g clip-path="url(#c3)" stroke="#5a5a5a" stroke-width="0.8">
<line x1="297.70" y1="97.50" x2="310.00" y2="109.80"/>
<line x1="284.20" y1="105.00" x2="310.00" y2="130.80"/>
<line x1="284.20" y1="125.00" x2="306.20" y2="147.00"/>
<line x1="284.20" y1="142.00" x2="289.20" y2="147.00"/>
</g>
<path d="M280.2 158.2 H314 V171.2 H280.2 Z" fill="#eaeaea" stroke="#5c5c5c" stroke-width="0.9"/>
<path d="M283.0 161.0 H311.2 V168.39999999999998 H283.0 Z" fill="#ffffff" stroke="#707070" stroke-width="0.8"/>
<line x1="280.2" y1="158.2" x2="283.0" y2="161.0" stroke="#5c5c5c" stroke-width="0.7" />
<line x1="314" y1="158.2" x2="311.2" y2="161.0" stroke="#5c5c5c" stroke-width="0.7" />
<line x1="280.2" y1="171.2" x2="283.0" y2="168.39999999999998" stroke="#5c5c5c" stroke-width="0.7" />
<line x1="314" y1="171.2" x2="311.2" y2="168.39999999999998" stroke="#5c5c5c" stroke-width="0.7" />
<path d="M280.2 178.6 H314 V219.6 H280.2 Z" fill="#eaeaea" stroke="#5c5c5c" stroke-width="0.9"/>
<path d="M283.9 182.29999999999998 H310.3 V215.9 H283.9 Z" fill="#ffffff" stroke="#707070" stroke-width="0.8"/>
<line x1="280.2" y1="178.6" x2="283.9" y2="182.29999999999998" stroke="#5c5c5c" stroke-width="0.7" />
<line x1="314" y1="178.6" x2="310.3" y2="182.29999999999998" stroke="#5c5c5c" stroke-width="0.7" />
<line x1="280.2" y1="219.6" x2="283.9" y2="215.9" stroke="#5c5c5c" stroke-width="0.7" />
<line x1="314" y1="219.6" x2="310.3" y2="215.9" stroke="#5c5c5c" stroke-width="0.7" />
<rect x="352.5" y="86.5" width="54.0" height="143.0" fill="none" stroke="#8a8a8a" stroke-width="1" />
<path d="M358.9 158.5 L358.90 103.10 L359.97 101.80 L361.04 100.66 L362.11 99.64 L363.17 98.74 L364.24 97.92 L365.31 97.19 L366.38 96.54 L367.45 95.96 L368.52 95.43 L369.59 94.97 L370.66 94.57 L371.73 94.22 L372.79 93.91 L373.86 93.66 L374.93 93.46 L376.00 93.30 L376.0 158.5 Z" fill="#eaeaea" stroke="#5c5c5c" stroke-width="0.9"/>
<path d="M360.9 156.5 L360.90 103.80 L361.72 102.85 L362.54 101.99 L363.36 101.21 L364.17 100.50 L364.99 99.85 L365.81 99.26 L366.63 98.73 L367.45 98.23 L368.27 97.78 L369.09 97.38 L369.91 97.01 L370.73 96.67 L371.54 96.38 L372.36 96.11 L373.18 95.88 L374.00 95.68 L374.0 156.5 Z" fill="#ffffff" stroke="#707070" stroke-width="0.7"/>
<clipPath id="c4"><path d="M360.9 156.5 L360.90 103.80 L361.72 102.85 L362.54 101.99 L363.36 101.21 L364.17 100.50 L364.99 99.85 L365.81 99.26 L366.63 98.73 L367.45 98.23 L368.27 97.78 L369.09 97.38 L369.91 97.01 L370.73 96.67 L371.54 96.38 L372.36 96.11 L373.18 95.88 L374.00 95.68 L374.0 156.5 Z"/></clipPath>
<g clip-path="url(#c4)" stroke="#5a5a5a" stroke-width="0.8">
<line x1="365.70" y1="96.80" x2="372.20" y2="103.30"/>
<line x1="362.70" y1="104.80" x2="372.20" y2="114.30"/>
<line x1="362.70" y1="116.80" x2="372.20" y2="126.30"/>
<line x1="362.70" y1="134.80" x2="372.20" y2="144.30"/>
<line x1="362.70" y1="150.80" x2="366.60" y2="154.70"/>
</g>
<path d="M382.5 158.5 L382.50 93.31 L383.61 93.48 L384.71 93.70 L385.82 93.97 L386.93 94.29 L388.03 94.67 L389.14 95.11 L390.24 95.60 L391.35 96.17 L392.46 96.80 L393.56 97.51 L394.67 98.30 L395.77 99.19 L396.88 100.19 L397.99 101.31 L399.09 102.59 L400.20 104.06 L400.2 158.5 Z" fill="#eaeaea" stroke="#5c5c5c" stroke-width="0.9"/>
<path d="M384.5 156.5 L384.50 95.70 L385.36 95.92 L386.21 96.17 L387.07 96.45 L387.93 96.77 L388.78 97.13 L389.64 97.53 L390.49 97.98 L391.35 98.47 L392.21 99.01 L393.06 99.60 L393.92 100.25 L394.77 100.97 L395.63 101.76 L396.49 102.63 L397.34 103.61 L398.20 104.70 L398.2 156.5 Z" fill="#ffffff" stroke="#707070" stroke-width="0.7"/>
<clipPath id="c5"><path d="M384.5 156.5 L384.50 95.70 L385.36 95.92 L386.21 96.17 L387.07 96.45 L387.93 96.77 L388.78 97.13 L389.64 97.53 L390.49 97.98 L391.35 98.47 L392.21 99.01 L393.06 99.60 L393.92 100.25 L394.77 100.97 L395.63 101.76 L396.49 102.63 L397.34 103.61 L398.20 104.70 L398.2 156.5 Z"/></clipPath>
<g clip-path="url(#c5)" stroke="#5a5a5a" stroke-width="0.8">
<line x1="389.30" y1="96.80" x2="396.40" y2="103.90"/>
<line x1="386.30" y1="104.80" x2="396.40" y2="114.90"/>
<line x1="386.30" y1="116.80" x2="396.40" y2="126.90"/>
<line x1="386.30" y1="134.80" x2="396.40" y2="144.90"/>
<line x1="386.30" y1="150.80" x2="390.20" y2="154.70"/>
</g>
<path d="M358.7 168 H376.4 V219.6 H358.7 Z" fill="#eaeaea" stroke="#5c5c5c" stroke-width="0.9"/>
<path d="M362.4 171.7 H372.7 V215.9 H362.4 Z" fill="#ffffff" stroke="#707070" stroke-width="0.8"/>
<line x1="358.7" y1="168" x2="362.4" y2="171.7" stroke="#5c5c5c" stroke-width="0.7" />
<line x1="376.4" y1="168" x2="372.7" y2="171.7" stroke="#5c5c5c" stroke-width="0.7" />
<line x1="358.7" y1="219.6" x2="362.4" y2="215.9" stroke="#5c5c5c" stroke-width="0.7" />
<line x1="376.4" y1="219.6" x2="372.7" y2="215.9" stroke="#5c5c5c" stroke-width="0.7" />
<path d="M382.3 168 H400 V219.6 H382.3 Z" fill="#eaeaea" stroke="#5c5c5c" stroke-width="0.9"/>
<path d="M386.0 171.7 H396.3 V215.9 H386.0 Z" fill="#ffffff" stroke="#707070" stroke-width="0.8"/>
<line x1="382.3" y1="168" x2="386.0" y2="171.7" stroke="#5c5c5c" stroke-width="0.7" />
<line x1="400" y1="168" x2="396.3" y2="171.7" stroke="#5c5c5c" stroke-width="0.7" />
<line x1="382.3" y1="219.6" x2="386.0" y2="215.9" stroke="#5c5c5c" stroke-width="0.7" />
<line x1="400" y1="219.6" x2="396.3" y2="215.9" stroke="#5c5c5c" stroke-width="0.7" />
<rect x="438.5" y="86.5" width="55.0" height="143.0" fill="none" stroke="#8a8a8a" stroke-width="1" />
<path d="M445 93.8 H462.6 V114.4 H445 Z" fill="#f0f0f0" stroke="#5c5c5c" stroke-width="0.9"/>
<path d="M447.2 96.0 H460.40000000000003 V112.2 H447.2 Z" fill="#ffffff" stroke="#707070" stroke-width="0.7"/>
<clipPath id="c6"><path d="M447.2 96.0 H460.40000000000003 V112.2 H447.2 Z"/></clipPath>
<g clip-path="url(#c6)" stroke="#5a5a5a" stroke-width="0.8">
<line x1="456.00" y1="97.80" x2="458.60" y2="100.40"/>
<line x1="449.00" y1="100.80" x2="458.60" y2="110.40"/>
<line x1="449.00" y1="107.20" x2="452.20" y2="110.40"/>
</g>
<path d="M469 93.8 H486.6 V114.4 H469 Z" fill="#f0f0f0" stroke="#5c5c5c" stroke-width="0.9"/>
<path d="M471.2 96.0 H484.40000000000003 V112.2 H471.2 Z" fill="#ffffff" stroke="#707070" stroke-width="0.7"/>
<clipPath id="c7"><path d="M471.2 96.0 H484.40000000000003 V112.2 H471.2 Z"/></clipPath>
<g clip-path="url(#c7)" stroke="#5a5a5a" stroke-width="0.8">
<line x1="480.00" y1="97.80" x2="482.60" y2="100.40"/>
<line x1="473.00" y1="100.80" x2="482.60" y2="110.40"/>
<line x1="473.00" y1="107.20" x2="476.20" y2="110.40"/>
</g>
<path d="M445 120.3 H462.6 V164.7 H445 Z" fill="#f0f0f0" stroke="#5c5c5c" stroke-width="0.9"/>
<path d="M447.2 122.5 H460.40000000000003 V162.5 H447.2 Z" fill="#ffffff" stroke="#707070" stroke-width="0.7"/>
<clipPath id="c8"><path d="M447.2 122.5 H460.40000000000003 V162.5 H447.2 Z"/></clipPath>
<g clip-path="url(#c8)" stroke="#5a5a5a" stroke-width="0.8">
<line x1="455.00" y1="124.30" x2="458.60" y2="127.90"/>
<line x1="449.00" y1="130.90" x2="458.60" y2="140.50"/>
<line x1="449.00" y1="148.30" x2="458.60" y2="157.90"/>
</g>
<path d="M469 120.3 H486.6 V164.7 H469 Z" fill="#f0f0f0" stroke="#5c5c5c" stroke-width="0.9"/>
<path d="M471.2 122.5 H484.40000000000003 V162.5 H471.2 Z" fill="#ffffff" stroke="#707070" stroke-width="0.7"/>
<clipPath id="c9"><path d="M471.2 122.5 H484.40000000000003 V162.5 H471.2 Z"/></clipPath>
<g clip-path="url(#c9)" stroke="#5a5a5a" stroke-width="0.8">
<line x1="479.00" y1="124.30" x2="482.60" y2="127.90"/>
<line x1="473.00" y1="130.90" x2="482.60" y2="140.50"/>
<line x1="473.00" y1="148.30" x2="482.60" y2="157.90"/>
</g>
<path d="M445 171.2 H462.6 V219.6 H445 Z" fill="#eaeaea" stroke="#5c5c5c" stroke-width="0.9"/>
<path d="M448.7 174.89999999999998 H458.90000000000003 V215.9 H448.7 Z" fill="#ffffff" stroke="#707070" stroke-width="0.8"/>
<line x1="445" y1="171.2" x2="448.7" y2="174.89999999999998" stroke="#5c5c5c" stroke-width="0.7" />
<line x1="462.6" y1="171.2" x2="458.90000000000003" y2="174.89999999999998" stroke="#5c5c5c" stroke-width="0.7" />
<line x1="445" y1="219.6" x2="448.7" y2="215.9" stroke="#5c5c5c" stroke-width="0.7" />
<line x1="462.6" y1="219.6" x2="458.90000000000003" y2="215.9" stroke="#5c5c5c" stroke-width="0.7" />
<path d="M469 171.2 H486.6 V219.6 H469 Z" fill="#eaeaea" stroke="#5c5c5c" stroke-width="0.9"/>
<path d="M472.7 174.89999999999998 H482.90000000000003 V215.9 H472.7 Z" fill="#ffffff" stroke="#707070" stroke-width="0.8"/>
<line x1="469" y1="171.2" x2="472.7" y2="174.89999999999998" stroke="#5c5c5c" stroke-width="0.7" />
<line x1="486.6" y1="171.2" x2="482.90000000000003" y2="174.89999999999998" stroke="#5c5c5c" stroke-width="0.7" />
<line x1="469" y1="219.6" x2="472.7" y2="215.9" stroke="#5c5c5c" stroke-width="0.7" />
<line x1="486.6" y1="219.6" x2="482.90000000000003" y2="215.9" stroke="#5c5c5c" stroke-width="0.7" />
<rect x="514.5" y="87.5" width="54.0" height="142.0" fill="none" stroke="#8a8a8a" stroke-width="1" />
<path d="M524 93.2 H558.7 V127.5 H524 Z" fill="#f0f0f0" stroke="#5c5c5c" stroke-width="0.9"/>
<path d="M526.2 95.4 H556.5 V125.3 H526.2 Z" fill="#ffffff" stroke="#707070" stroke-width="0.7"/>
<clipPath id="c10"><path d="M526.2 95.4 H556.5 V125.3 H526.2 Z"/></clipPath>
<g clip-path="url(#c10)" stroke="#5a5a5a" stroke-width="0.8">
<line x1="541.40" y1="97.20" x2="554.70" y2="110.50"/>
<line x1="528.00" y1="100.60" x2="550.90" y2="123.50"/>
<line x1="528.00" y1="118.00" x2="533.50" y2="123.50"/>
</g>
<rect x="173.5" y="258.5" width="54.0" height="142.0" fill="none" stroke="#8a8a8a" stroke-width="1" />
<path d="M183.2 336.9 L183.20 274.73 L185.41 271.12 L187.62 268.74 L189.84 267.01 L192.05 265.73 L194.26 264.82 L196.47 264.21 L198.69 263.88 L200.90 263.81 L203.11 263.99 L205.32 264.45 L207.54 265.19 L209.75 266.26 L211.96 267.72 L214.17 269.71 L216.39 272.53 L218.60 277.34 L218.6 336.9 Z" fill="#eaeaea" stroke="#5c5c5c" stroke-width="0.9"/>
<path d="M185.2 288.4 L185.20 275.19 L186.06 273.67 L186.92 272.44 L187.79 271.40 L188.65 270.51 L189.51 269.74 L190.38 269.07 L191.24 268.48 L192.10 267.96 L192.96 267.51 L193.82 267.12 L194.69 266.79 L195.55 266.51 L196.41 266.27 L197.28 266.09 L198.14 265.95 L199.00 265.86 L199.0 288.4 Z" fill="#ffffff" stroke="#707070" stroke-width="0.7"/>
<clipPath id="c11"><path d="M185.2 288.4 L185.20 275.19 L186.06 273.67 L186.92 272.44 L187.79 271.40 L188.65 270.51 L189.51 269.74 L190.38 269.07 L191.24 268.48 L192.10 267.96 L192.96 267.51 L193.82 267.12 L194.69 266.79 L195.55 266.51 L196.41 266.27 L197.28 266.09 L198.14 265.95 L199.00 265.86 L199.0 288.4 Z"/></clipPath>
<g clip-path="url(#c11)" stroke="#5a5a5a" stroke-width="0.8">
<line x1="194.00" y1="269.30" x2="197.20" y2="272.50"/>
<line x1="187.00" y1="270.30" x2="197.20" y2="280.50"/>
<line x1="187.00" y1="279.30" x2="194.30" y2="286.60"/>
</g>
<path d="M201.8 288.4 L201.80 265.86 L202.73 265.96 L203.65 266.11 L204.58 266.32 L205.50 266.58 L206.43 266.90 L207.35 267.29 L208.28 267.73 L209.20 268.25 L210.12 268.86 L211.05 269.55 L211.97 270.35 L212.90 271.28 L213.82 272.37 L214.75 273.69 L215.67 275.34 L216.60 277.65 L216.6 288.4 Z" fill="#ffffff" stroke="#707070" stroke-width="0.7"/>
<clipPath id="c12"><path d="M201.8 288.4 L201.80 265.86 L202.73 265.96 L203.65 266.11 L204.58 266.32 L205.50 266.58 L206.43 266.90 L207.35 267.29 L208.28 267.73 L209.20 268.25 L210.12 268.86 L211.05 269.55 L211.97 270.35 L212.90 271.28 L213.82 272.37 L214.75 273.69 L215.67 275.34 L216.60 277.65 L216.6 288.4 Z"/></clipPath>
<g clip-path="url(#c12)" stroke="#5a5a5a" stroke-width="0.8">
<line x1="210.60" y1="269.30" x2="214.80" y2="273.50"/>
<line x1="203.60" y1="270.30" x2="214.80" y2="281.50"/>
<line x1="203.60" y1="279.30" x2="210.90" y2="286.60"/>
</g>
<path d="M185.2 290.2 H199.0 V311.7 H185.2 Z" fill="#ffffff" stroke="#707070" stroke-width="0.7"/>
<clipPath id="c13"><path d="M185.2 290.2 H199.0 V311.7 H185.2 Z"/></clipPath>
<g clip-path="url(#c13)" stroke="#5a5a5a" stroke-width="0.8">
<line x1="194.00" y1="292.00" x2="197.20" y2="295.20"/>
<line x1="187.00" y1="293.00" x2="197.20" y2="303.20"/>
<line x1="187.00" y1="302.00" x2="194.90" y2="309.90"/>
</g>
<path d="M201.8 290.2 H216.6 V311.7 H201.8 Z" fill="#ffffff" stroke="#707070" stroke-width="0.7"/>
<clipPath id="c14"><path d="M201.8 290.2 H216.6 V311.7 H201.8 Z"/></clipPath>
<g clip-path="url(#c14)" stroke="#5a5a5a" stroke-width="0.8">
<line x1="210.60" y1="292.00" x2="214.80" y2="296.20"/>
<line x1="203.60" y1="293.00" x2="214.80" y2="304.20"/>
<line x1="203.60" y1="302.00" x2="211.50" y2="309.90"/>
</g>
<path d="M185.2 314.1 H199.0 V334.9 H185.2 Z" fill="#ffffff" stroke="#707070" stroke-width="0.7"/>
<clipPath id="c15"><path d="M185.2 314.1 H199.0 V334.9 H185.2 Z"/></clipPath>
<g clip-path="url(#c15)" stroke="#5a5a5a" stroke-width="0.8">
<line x1="194.00" y1="315.90" x2="197.20" y2="319.10"/>
<line x1="187.00" y1="316.90" x2="197.20" y2="327.10"/>
<line x1="187.00" y1="325.90" x2="194.20" y2="333.10"/>
</g>
<path d="M201.8 314.1 H216.6 V334.9 H201.8 Z" fill="#ffffff" stroke="#707070" stroke-width="0.7"/>
<clipPath id="c16"><path d="M201.8 314.1 H216.6 V334.9 H201.8 Z"/></clipPath>
<g clip-path="url(#c16)" stroke="#5a5a5a" stroke-width="0.8">
<line x1="210.60" y1="315.90" x2="214.80" y2="320.10"/>
<line x1="203.60" y1="316.90" x2="214.80" y2="328.10"/>
<line x1="203.60" y1="325.90" x2="210.80" y2="333.10"/>
</g>
<path d="M183.1 346 H217.4 V390.6 H183.1 Z" fill="#eaeaea" stroke="#5c5c5c" stroke-width="0.9"/>
<path d="M186.79999999999998 349.7 H213.70000000000002 V386.90000000000003 H186.79999999999998 Z" fill="#ffffff" stroke="#707070" stroke-width="0.8"/>
<line x1="183.1" y1="346" x2="186.79999999999998" y2="349.7" stroke="#5c5c5c" stroke-width="0.7" />
<line x1="217.4" y1="346" x2="213.70000000000002" y2="349.7" stroke="#5c5c5c" stroke-width="0.7" />
<line x1="183.1" y1="390.6" x2="186.79999999999998" y2="386.90000000000003" stroke="#5c5c5c" stroke-width="0.7" />
<line x1="217.4" y1="390.6" x2="213.70000000000002" y2="386.90000000000003" stroke="#5c5c5c" stroke-width="0.7" />
<rect x="266.5" y="258.5" width="55.0" height="142.0" fill="none" stroke="#8a8a8a" stroke-width="1" />
<path d="M273.3 265 H290.7 V285.4 H273.3 Z" fill="#f0f0f0" stroke="#5c5c5c" stroke-width="0.9"/>
<path d="M275.5 267.2 H288.5 V283.2 H275.5 Z" fill="#ffffff" stroke="#707070" stroke-width="0.7"/>
<clipPath id="c17"><path d="M275.5 267.2 H288.5 V283.2 H275.5 Z"/></clipPath>
<g clip-path="url(#c17)" stroke="#5a5a5a" stroke-width="0.8">
<line x1="284.80" y1="269.00" x2="286.70" y2="270.90"/>
<line x1="277.30" y1="269.50" x2="286.70" y2="278.90"/>
<line x1="277.30" y1="279.20" x2="279.50" y2="281.40"/>
</g>
<path d="M297 265 H314.5 V285.4 H297 Z" fill="#f0f0f0" stroke="#5c5c5c" stroke-width="0.9"/>
<path d="M299.2 267.2 H312.3 V283.2 H299.2 Z" fill="#ffffff" stroke="#707070" stroke-width="0.7"/>
<clipPath id="c18"><path d="M299.2 267.2 H312.3 V283.2 H299.2 Z"/></clipPath>
<g clip-path="url(#c18)" stroke="#5a5a5a" stroke-width="0.8">
<line x1="308.50" y1="269.00" x2="310.50" y2="271.00"/>
<line x1="301.00" y1="269.50" x2="310.50" y2="279.00"/>
<line x1="301.00" y1="279.20" x2="303.20" y2="281.40"/>
</g>
<path d="M273.3 292 H290.7 V312.4 H273.3 Z" fill="#f0f0f0" stroke="#5c5c5c" stroke-width="0.9"/>
<path d="M275.5 294.2 H288.5 V310.2 H275.5 Z" fill="#ffffff" stroke="#707070" stroke-width="0.7"/>
<clipPath id="c19"><path d="M275.5 294.2 H288.5 V310.2 H275.5 Z"/></clipPath>
<g clip-path="url(#c19)" stroke="#5a5a5a" stroke-width="0.8">
<line x1="284.80" y1="296.00" x2="286.70" y2="297.90"/>
<line x1="277.30" y1="296.50" x2="286.70" y2="305.90"/>
<line x1="277.30" y1="306.20" x2="279.50" y2="308.40"/>
</g>
<path d="M297 292 H314.5 V312.4 H297 Z" fill="#f0f0f0" stroke="#5c5c5c" stroke-width="0.9"/>
<path d="M299.2 294.2 H312.3 V310.2 H299.2 Z" fill="#ffffff" stroke="#707070" stroke-width="0.7"/>
<clipPath id="c20"><path d="M299.2 294.2 H312.3 V310.2 H299.2 Z"/></clipPath>
<g clip-path="url(#c20)" stroke="#5a5a5a" stroke-width="0.8">
<line x1="308.50" y1="296.00" x2="310.50" y2="298.00"/>
<line x1="301.00" y1="296.50" x2="310.50" y2="306.00"/>
<line x1="301.00" y1="306.20" x2="303.20" y2="308.40"/>
</g>
<path d="M273.3 319 H290.7 V339.2 H273.3 Z" fill="#f0f0f0" stroke="#5c5c5c" stroke-width="0.9"/>
<path d="M275.5 321.2 H288.5 V337.0 H275.5 Z" fill="#ffffff" stroke="#707070" stroke-width="0.7"/>
<clipPath id="c21"><path d="M275.5 321.2 H288.5 V337.0 H275.5 Z"/></clipPath>
<g clip-path="url(#c21)" stroke="#5a5a5a" stroke-width="0.8">
<line x1="284.80" y1="323.00" x2="286.70" y2="324.90"/>
<line x1="277.30" y1="323.50" x2="286.70" y2="332.90"/>
<line x1="277.30" y1="333.20" x2="279.30" y2="335.20"/>
</g>
<path d="M297 319 H314.5 V339.2 H297 Z" fill="#f0f0f0" stroke="#5c5c5c" stroke-width="0.9"/>
<path d="M299.2 321.2 H312.3 V337.0 H299.2 Z" fill="#ffffff" stroke="#707070" stroke-width="0.7"/>
<clipPath id="c22"><path d="M299.2 321.2 H312.3 V337.0 H299.2 Z"/></clipPath>
<g clip-path="url(#c22)" stroke="#5a5a5a" stroke-width="0.8">
<line x1="308.50" y1="323.00" x2="310.50" y2="325.00"/>
<line x1="301.00" y1="323.50" x2="310.50" y2="333.00"/>
<line x1="301.00" y1="333.20" x2="303.00" y2="335.20"/>
</g>
<path d="M273.3 346 H290.7 V366.7 H273.3 Z" fill="#f0f0f0" stroke="#5c5c5c" stroke-width="0.9"/>
<path d="M275.5 348.2 H288.5 V364.5 H275.5 Z" fill="#ffffff" stroke="#707070" stroke-width="0.7"/>
<clipPath id="c23"><path d="M275.5 348.2 H288.5 V364.5 H275.5 Z"/></clipPath>
<g clip-path="url(#c23)" stroke="#5a5a5a" stroke-width="0.8">
<line x1="284.80" y1="350.00" x2="286.70" y2="351.90"/>
<line x1="277.30" y1="350.50" x2="286.70" y2="359.90"/>
<line x1="277.30" y1="360.20" x2="279.80" y2="362.70"/>
</g>
<path d="M297 346 H314.5 V366.7 H297 Z" fill="#f0f0f0" stroke="#5c5c5c" stroke-width="0.9"/>
<path d="M299.2 348.2 H312.3 V364.5 H299.2 Z" fill="#ffffff" stroke="#707070" stroke-width="0.7"/>
<clipPath id="c24"><path d="M299.2 348.2 H312.3 V364.5 H299.2 Z"/></clipPath>
<g clip-path="url(#c24)" stroke="#5a5a5a" stroke-width="0.8">
<line x1="308.50" y1="350.00" x2="310.50" y2="352.00"/>
<line x1="301.00" y1="350.50" x2="310.50" y2="360.00"/>
<line x1="301.00" y1="360.20" x2="303.50" y2="362.70"/>
</g>
<path d="M273.3 373.3 H290.7 V394 H273.3 Z" fill="#f0f0f0" stroke="#5c5c5c" stroke-width="0.9"/>
<path d="M275.5 375.5 H288.5 V391.8 H275.5 Z" fill="#ffffff" stroke="#707070" stroke-width="0.7"/>
<clipPath id="c25"><path d="M275.5 375.5 H288.5 V391.8 H275.5 Z"/></clipPath>
<g clip-path="url(#c25)" stroke="#5a5a5a" stroke-width="0.8">
<line x1="284.80" y1="377.30" x2="286.70" y2="379.20"/>
<line x1="277.30" y1="377.80" x2="286.70" y2="387.20"/>
<line x1="277.30" y1="387.50" x2="279.80" y2="390.00"/>
</g>
<path d="M297 373.3 H314.5 V394 H297 Z" fill="#f0f0f0" stroke="#5c5c5c" stroke-width="0.9"/>
<path d="M299.2 375.5 H312.3 V391.8 H299.2 Z" fill="#ffffff" stroke="#707070" stroke-width="0.7"/>
<clipPath id="c26"><path d="M299.2 375.5 H312.3 V391.8 H299.2 Z"/></clipPath>
<g clip-path="url(#c26)" stroke="#5a5a5a" stroke-width="0.8">
<line x1="308.50" y1="377.30" x2="310.50" y2="379.30"/>
<line x1="301.00" y1="377.80" x2="310.50" y2="387.30"/>
<line x1="301.00" y1="387.50" x2="303.50" y2="390.00"/>
</g>
<rect x="352.5" y="258.5" width="54.0" height="142.0" fill="none" stroke="#8a8a8a" stroke-width="1" />
<path d="M362 264.5 H396.5 V335.7 H362 Z" fill="#eaeaea" stroke="#5c5c5c" stroke-width="0.9"/>
<path d="M365.7 268.2 H392.8 V332.0 H365.7 Z" fill="#ffffff" stroke="#707070" stroke-width="0.8"/>
<line x1="362" y1="264.5" x2="365.7" y2="268.2" stroke="#5c5c5c" stroke-width="0.7" />
<line x1="396.5" y1="264.5" x2="392.8" y2="268.2" stroke="#5c5c5c" stroke-width="0.7" />
<line x1="362" y1="335.7" x2="365.7" y2="332.0" stroke="#5c5c5c" stroke-width="0.7" />
<line x1="396.5" y1="335.7" x2="392.8" y2="332.0" stroke="#5c5c5c" stroke-width="0.7" />
<path d="M362 342.5 H396.5 V390.6 H362 Z" fill="#eaeaea" stroke="#5c5c5c" stroke-width="0.9"/>
<path d="M365.7 346.2 H392.8 V386.90000000000003 H365.7 Z" fill="#ffffff" stroke="#707070" stroke-width="0.8"/>
<line x1="362" y1="342.5" x2="365.7" y2="346.2" stroke="#5c5c5c" stroke-width="0.7" />
<line x1="396.5" y1="342.5" x2="392.8" y2="346.2" stroke="#5c5c5c" stroke-width="0.7" />
<line x1="362" y1="390.6" x2="365.7" y2="386.90000000000003" stroke="#5c5c5c" stroke-width="0.7" />
<line x1="396.5" y1="390.6" x2="392.8" y2="386.90000000000003" stroke="#5c5c5c" stroke-width="0.7" />
<rect x="438.5" y="256.5" width="54.0" height="142.0" fill="none" stroke="#8a8a8a" stroke-width="1" />
<path d="M444.6 263.3 H462 V344.5 H444.6 Z" fill="#eaeaea" stroke="#5c5c5c" stroke-width="0.9"/>
<path d="M448.3 267.0 H458.3 V340.8 H448.3 Z" fill="#ffffff" stroke="#707070" stroke-width="0.8"/>
<line x1="444.6" y1="263.3" x2="448.3" y2="267.0" stroke="#5c5c5c" stroke-width="0.7" />
<line x1="462" y1="263.3" x2="458.3" y2="267.0" stroke="#5c5c5c" stroke-width="0.7" />
<line x1="444.6" y1="344.5" x2="448.3" y2="340.8" stroke="#5c5c5c" stroke-width="0.7" />
<line x1="462" y1="344.5" x2="458.3" y2="340.8" stroke="#5c5c5c" stroke-width="0.7" />
<rect x="514.5" y="256.5" width="55.0" height="142.0" fill="none" stroke="#8a8a8a" stroke-width="1" />
<path d="M524.4 263.2 H558.7 V300.2 H524.4 Z" fill="#eaeaea" stroke="#5c5c5c" stroke-width="0.9"/>
<path d="M528.1 266.9 H555.0 V296.5 H528.1 Z" fill="#ffffff" stroke="#707070" stroke-width="0.8"/>
<line x1="524.4" y1="263.2" x2="528.1" y2="266.9" stroke="#5c5c5c" stroke-width="0.7" />
<line x1="558.7" y1="263.2" x2="555.0" y2="266.9" stroke="#5c5c5c" stroke-width="0.7" />
<line x1="524.4" y1="300.2" x2="528.1" y2="296.5" stroke="#5c5c5c" stroke-width="0.7" />
<line x1="558.7" y1="300.2" x2="555.0" y2="296.5" stroke="#5c5c5c" stroke-width="0.7" />
<path d="M6 412.5 H13 M6 414.7 H13 M6 416.9 H13" stroke="#c9cdd3" stroke-width="0.9"/>
<line x1="20" y1="411" x2="18" y2="419.5" stroke="#4a515b" stroke-width="0.6" />
<text x="24" y="417.8" font-size="6" fill="#dde0e5" text-anchor="start" font-weight="normal" textLength="13.5" lengthAdjust="spacingAndGlyphs" >Model</text>
<path d="M42.5 422.5 L45.5 409.8 H90 L87 422.5 Z" fill="#333944"/>
<text x="47" y="417.6" font-size="5.6" fill="#e8ebef" text-anchor="start" font-weight="bold" textLength="37" lengthAdjust="spacingAndGlyphs" >PislikMimar.com</text>
<path d="M97 411.5 V418.5 M93.5 415 H100.5" stroke="#d8dce1" stroke-width="1"/>
<line x1="107" y1="411" x2="105" y2="419.5" stroke="#4a515b" stroke-width="0.6" />
<rect x="602.9" y="411.8" width="15.6" height="8.6" fill="#343a44" stroke="none" stroke-width="1" />
<text x="604" y="418.2" font-size="5.2" fill="#e2e5e9" text-anchor="start" font-weight="bold" textLength="13.5" lengthAdjust="spacingAndGlyphs" >PAPER</text>
<path d="M622 412.3 V419.2 H628.3 M623.5 417.5 V419.2 M625.3 418 V419.2" stroke="#c3c8cf" stroke-width="0.7" fill="none"/>
<path d="M636.8 414 A2.9 2.9 0 1 0 637.2 416.5 M634 415.8 L637 414" stroke="#c3c8cf" stroke-width="0.7" fill="none"/>
<path d="M641.7 415.2 L643.7 415.2 L642.7 416.5 Z" fill="#c3c8cf"/>
<path d="M650.5 412 V419.5 M648.8 414 L652.5 417.5" stroke="#c3c8cf" stroke-width="0.6"/>
<path d="M657.8 415.2 L659.8 415.2 L658.8 416.5 Z" fill="#c3c8cf"/>
<rect x="662.9" y="411.8" width="9.2" height="8.6" fill="#5a8ecf" stroke="none" stroke-width="1" />
<path d="M665 418.5 L670 413.5" stroke="#e8f0fa" stroke-width="0.8"/><path d="M664.8 418.8 H667" stroke="#e8f0fa" stroke-width="0.6"/>
<rect x="672.9" y="411.8" width="9.2" height="8.6" fill="#5a8ecf" stroke="none" stroke-width="1" />
<rect x="674.8" y="413.3" width="5.4" height="5.6" fill="none" stroke="#e8f0fa" stroke-width="0.7" />
<path d="M684.4 415.2 L686.4 415.2 L685.4 416.5 Z" fill="#c3c8cf"/>
<g stroke="#c3c8cf" stroke-width="0.7" fill="none"><rect x="691.3" y="412.6" width="6.2" height="6.6" stroke-dasharray="1.2 0.8"/><path d="M692 418.5 L697 413.3 M692 413.3 L697 418.5"/></g>
<path d="M701.5 419.5 L704.5 413 L706.5 417 M703.3 416.5 L707.6 413" stroke="#c3c8cf" stroke-width="1" fill="none"/>
<path d="M711.2 419.5 L714.2 413 L716.2 417 M713 416.5 L717.3 413" stroke="#c3c8cf" stroke-width="1" fill="none"/>
<circle cx="725.2" cy="416" r="2.2" fill="none" stroke="#c3c8cf" stroke-width="1.8" stroke-dasharray="1.2 0.6"/><circle cx="725.2" cy="416" r="1.9" fill="none" stroke="#c3c8cf" stroke-width="1.1"/>
<path d="M732.8 415.4 L734.8 415.4 L733.8 416.7 Z" fill="#c3c8cf"/>
<path d="M742 412.5 V419.5 M738.7 416 H745.4" stroke="#c3c8cf" stroke-width="0.9"/>
<g stroke="#c3c8cf" stroke-width="0.7" fill="none"><circle cx="751" cy="414" r="1.6"/><circle cx="753.8" cy="418" r="1.6"/><path d="M749.5 419.5 L755.5 412.5"/></g>
<g stroke="#c3c8cf" stroke-width="0.7" fill="none"><rect x="760.3" y="412.8" width="6.8" height="6.2"/><path d="M762 417.5 L765.5 414.5"/></g>
<path d="M771 412.6 H778.3 M771 416 H778.3 M771 419.4 H778.3" stroke="#c3c8cf" stroke-width="0.9"/>
<rect x="771.6" y="407.2" width="8.4" height="2.3" fill="#b9bec5" stroke="none" stroke-width="1" />
<line x1="771" y1="74.5" x2="780" y2="74.5" stroke="#9a9a9a" stroke-width="0.8" />
<g fill="#ffffff"><rect x="6" y="427" width="3.3" height="3.3"/><rect x="9.8" y="427" width="3.3" height="3.3"/><rect x="6" y="430.8" width="3.3" height="3.3"/><rect x="9.8" y="430.8" width="3.3" height="3.3"/></g>
<rect x="19.6" y="422.7" width="116.4" height="16.3" fill="#f3f3f3" stroke="none" stroke-width="1" />
<circle cx="28.5" cy="429.5" r="2.5" fill="none" stroke="#333" stroke-width="0.8"/><path d="M26.7 431.3 L24.2 434" stroke="#333" stroke-width="0.9"/>
<text x="36" y="433" font-size="6" fill="#333" text-anchor="start" font-weight="normal" textLength="9" lengthAdjust="spacingAndGlyphs" >Ara</text>
<defs><linearGradient id="tg" x1="0" y1="0" x2="1" y2="0.3"><stop offset="0" stop-color="#2a2e60"/><stop offset="0.35" stop-color="#7a78b0"/><stop offset="0.7" stop-color="#b898a8"/><stop offset="1" stop-color="#8a7090"/></linearGradient><radialGradient id="tglow" cx="0.72" cy="0.6" r="0.35"><stop offset="0" stop-color="#e8b090" stop-opacity="0.9"/><stop offset="1" stop-color="#e8b090" stop-opacity="0"/></radialGradient><clipPath id="tclip"><rect x="106" y="423.8" width="28.3" height="13.2" rx="3.5"/></clipPath></defs>
<g clip-path="url(#tclip)"><rect x="106" y="423.8" width="28.3" height="13.2" fill="url(#tg)"/><rect x="106" y="423.8" width="28.3" height="13.2" fill="url(#tglow)"/><rect x="106" y="433.5" width="28.3" height="4" fill="#6a2a30"/><path d="M121 433.5 L126 426 L128 433.5" stroke="#d8c8c0" stroke-width="0.5" fill="none"/></g>
<circle cx="147.7" cy="431" r="4.5" fill="#db4437"/><path d="M147.7 431 L143.8 433.25 A4.5 4.5 0 0 0 151.6 433.25 Z" fill="#0f9d58"/><path d="M147.7 431 L151.6 433.25 A4.5 4.5 0 0 0 147.7 426.5 Z" fill="#f4b400"/><circle cx="147.7" cy="431" r="2" fill="#4285f4" stroke="#fff" stroke-width="0.7"/>
<ellipse cx="167.4" cy="431" rx="4.2" ry="4.6" fill="#e0102a"/><ellipse cx="167.4" cy="431" rx="1.8" ry="3.4" fill="#1c1d20"/>
<rect x="177.8" y="422.5" width="19" height="16.5" fill="#3a3b3e" stroke="none" stroke-width="1" />
<rect x="182.5" y="426.3" width="9" height="9.2" fill="#c8203f" stroke="none" stroke-width="1" />
<text x="187" y="433.3" font-size="6.2" fill="#fff" text-anchor="middle" font-weight="bold" >A</text>
<ellipse cx="206.6" cy="431.5" rx="4.3" ry="3.3" fill="#c8ccd2"/><path d="M204 434 L210 427" stroke="#f0a030" stroke-width="1"/>
<path d="M223.5 426 H228 V436 L226 434.5 L223.5 436 Z" fill="#f2d26a"/>
<path d="M242.5 426.5 H251.5 V435.5 H242.5 Z" fill="#2f7fd8"/><path d="M243 435 L247 430 L251 435 Z" fill="#9fd0f8"/>
<rect x="138.7" y="438" width="18" height="1" fill="#76b9ed" stroke="none" stroke-width="1" />
<rect x="158.4" y="438" width="18" height="1" fill="#76b9ed" stroke="none" stroke-width="1" />
<rect x="178.2" y="438" width="18" height="1" fill="#76b9ed" stroke="none" stroke-width="1" />
<rect x="197.6" y="438" width="18" height="1" fill="#76b9ed" stroke="none" stroke-width="1" />
<rect x="217" y="438" width="18" height="1" fill="#76b9ed" stroke="none" stroke-width="1" />
<rect x="238" y="438" width="18" height="1" fill="#76b9ed" stroke="none" stroke-width="1" />
<path d="M714.6 431 L717.2 428.5 L719.8 431" stroke="#e0e0e0" stroke-width="0.8" fill="none"/>
<path d="M722 429.5 H723.5 L725.5 427.5 V434 L723.5 432 H722 Z" fill="#e0e0e0"/><path d="M727 429 L729 433 M729 429 L727 433" stroke="#e0e0e0" stroke-width="0.6"/>
<text x="745" y="429.1" font-size="5.6" fill="#f0f0f0" text-anchor="middle" font-weight="normal" textLength="10.7" lengthAdjust="spacingAndGlyphs" >10:33</text>
<text x="745.2" y="436.1" font-size="5.6" fill="#f0f0f0" text-anchor="middle" font-weight="normal" textLength="21.7" lengthAdjust="spacingAndGlyphs" >13.04.2026</text>
<path d="M763 428.3 H769.7 V434 H767 L766 435.5 L765 434 H763 Z" fill="none" stroke="#e0e0e0" stroke-width="0.7"/>
<line x1="48.5" y1="74" x2="48.5" y2="77.8" stroke="#555" stroke-width="0.8" />
<line x1="681.5" y1="73.8" x2="681.5" y2="75.8" stroke="#555" stroke-width="0.8" />
<line x1="134" y1="74" x2="134" y2="76.5" stroke="#60b0c0" stroke-width="0.7" />
<line x1="48.5" y1="404.5" x2="48.5" y2="409" stroke="#444" stroke-width="0.7" />
<line x1="681.3" y1="404" x2="681.3" y2="409" stroke="#444" stroke-width="0.7" />
<defs><linearGradient id="yg" x1="0" y1="0" x2="1" y2="0"><stop offset="0" stop-color="#f7ec9a"/><stop offset="0.5" stop-color="#f2d02a"/><stop offset="1" stop-color="#eec010"/></linearGradient><linearGradient id="bg1" x1="0" y1="0" x2="1" y2="1"><stop offset="0" stop-color="#2a4f86"/><stop offset="1" stop-color="#25477a"/></linearGradient></defs>
<path d="M35 309.4 H57 L71.1 322.5 V356.4 H35 Z" fill="url(#yg)"/>
<path d="M35 309.4 H57 L71.1 322.5 V342.6 L35 333.8 Z" fill="url(#bg1)"/>
<path d="M57 309.4 L71.1 322.5 H59 Q57 322.5 57 320 Z" fill="#4a6ea6"/>
<path d="M45.7 309.4 V334 M35 324.4 H71.1" stroke="#b8cbe6" stroke-width="1"/>
<rect x="42" y="320.6" width="7.6" height="7.6" fill="#2a4f86" stroke="#b8cbe6" stroke-width="1"/>
<rect x="45.2" y="323.9" width="1" height="1" fill="#b8cbe6"/>
<text x="45" y="354.6" font-size="12.5" fill="#141414" text-anchor="start" font-weight="bold" textLength="25.5" lengthAdjust="spacingAndGlyphs" >.dwg</text>
<defs><linearGradient id="rg" x1="0" y1="0" x2="0" y2="1"><stop offset="0" stop-color="#f42a33"/><stop offset="0.55" stop-color="#e01a25"/><stop offset="1" stop-color="#c8121c"/></linearGradient><radialGradient id="cg" cx="0.4" cy="0.35" r="0.7"><stop offset="0" stop-color="#d01c24"/><stop offset="1" stop-color="#8a0a12"/></radialGradient></defs>
<rect x="4.7" y="364.7" width="94.6" height="34" rx="17" fill="url(#rg)" stroke="#b8101a" stroke-width="0.8"/>
<text x="12.7" y="386.8" font-size="12" fill="#ffffff" text-anchor="start" font-weight="bold" textLength="55.3" lengthAdjust="spacingAndGlyphs" font-family="Liberation Sans">DOWNLOAD</text>
<circle cx="82" cy="381.4" r="10" fill="url(#cg)"/>
<path d="M80 374 H84.2 V381.2 H87.8 L82.1 389 L76.4 381.2 H80 Z" fill="#ffffff"/>
<path d="M700 152 Q690 155 688 163 L684 169 Q683 173 688 173 L696 171 L697 165 Q703 160 709 159 Q716 160 719 166 L720 173 Q723 177 729 176 L728 168 L724 162 Q722 155 718 152 Z" fill="#2f8edb" stroke="#1d4f80" stroke-width="0.7"/>
<path d="M688.5 162.5 L696.5 165.5" stroke="#333" stroke-width="1.6"/><path d="M719 166 L726 164.5" stroke="#333" stroke-width="1.6"/>
<path d="M697 128 Q690 131 686 140 L690 144 Q695 139 699 136 L699 155.5 H720 L720 136 Q726 133 733 126 L728 121 Q723 127 718 128 Z" fill="#2f8edb" stroke="#1d4f80" stroke-width="0.7"/>
<path d="M709 129 V155" stroke="#1d4f80" stroke-width="0.9"/><path d="M704 128.5 L709 135 L714 128.5" stroke="#1d4f80" stroke-width="0.6" fill="none"/>
<defs><linearGradient id="hairg" x1="0" y1="0" x2="0" y2="1"><stop offset="0" stop-color="#f9d84a"/><stop offset="1" stop-color="#e8a414"/></linearGradient></defs>
<path d="M691 102 Q690 117 698 123 Q708 128.5 721 124.5 Q729 119 730.5 103 Z" fill="#f2c38e" stroke="#6a4a30" stroke-width="0.6"/>
<ellipse cx="729.5" cy="112" rx="2.6" ry="4.2" fill="#f2c38e" stroke="#6a4a30" stroke-width="0.5"/>
<path d="M692.5 99 Q692 92 694.5 88 L696.5 90 Q697 84 701 81.5 L702 84.5 Q705 80 711 79.8 L709.5 83 Q715 79.5 721 81 L718.5 83.5 Q725 83 728.5 87.5 L725.5 88.5 Q730.5 91.5 730.5 99 Z" fill="url(#hairg)" stroke="#7a5a10" stroke-width="0.6"/>
<path d="M699 96 Q700 89 705 85 M708 96 Q709 88 714 84 M717 96 Q719 89 724 87" stroke="#e09a18" stroke-width="0.7" fill="none"/>
<path d="M690.7 98.6 Q711 96.5 731 98.6 L731 107.3 Q711 105 690.7 107.3 Z" fill="#3e3e3e"/>
<path d="M692 100 Q711 98 730 100" stroke="#6a6a6a" stroke-width="0.6" fill="none"/>
<path d="M730 99.5 Q737 98.5 743.7 105 Q741 106 739 104.5 Q741 109 740 112.5 Q736 107 731 106.5 Z" fill="#3a3a3a"/>
<ellipse cx="701" cy="110" rx="3.6" ry="2.2" fill="#ffffff"/><circle cx="702" cy="110.4" r="1.5" fill="#5a9ad0"/><path d="M697.3 109.5 Q701 107 704.8 109" stroke="#2a2a2a" stroke-width="1" fill="none"/>
<ellipse cx="716.3" cy="110" rx="3.6" ry="2.2" fill="#ffffff"/><circle cx="715.6" cy="110.4" r="1.5" fill="#5a9ad0"/><path d="M712.6 109 Q716.3 107 720 109.5" stroke="#2a2a2a" stroke-width="1" fill="none"/>
<path d="M704.5 117.8 Q710 121 717 118.5" stroke="#6a3a20" stroke-width="0.8" fill="none"/>
<path d="M668.4 148.5 L750 116.5" stroke="#5a3515" stroke-width="3.2" stroke-linecap="round"/>
<path d="M668.4 148.5 L750 116.5" stroke="#a86a35" stroke-width="2.0" stroke-linecap="round"/>
<path d="M745 104 Q748 101 752 106 Q756 110 760 111 Q762 115 758 118 Q756 122 757 128 Q754 130 752 124 Q750 118 746 114 Q742 108 745 104 Z" fill="#f2c020" stroke="#c89010" stroke-width="0.6"/>
<circle cx="687.5" cy="141.5" r="2.4" fill="#f2c9a0" stroke="#6a4a30" stroke-width="0.4"/><circle cx="730.5" cy="124.5" r="2.6" fill="#f2c9a0" stroke="#6a4a30" stroke-width="0.4"/>
<defs><linearGradient id="pg" x1="0" y1="0" x2="0" y2="1"><stop offset="0" stop-color="#46a8e6"/><stop offset="1" stop-color="#1f7fc8"/></linearGradient></defs>
<g fill="none" stroke="#2a8ed6" stroke-width="2.8" stroke-linecap="round" stroke-linejoin="round">
<path d="M646.7 189.5 L645.8 172.5 Q652 172.6 656 174.5 Q661.5 177.5 661.5 182.5 Q656 184.5 648 184.3"/>
<path d="M662 190.5 L662.8 195.2"/>
<path d="M672.5 188 Q668.5 186.8 667.8 189.5 Q668 191.8 671 192.5 Q673.5 194 672.5 196.5 Q670 198 667.5 196.5"/>
<path d="M677.8 183 L681 199"/>
<path d="M686.2 193 L687.4 199"/><circle cx="685" cy="187.6" r="0.6"/>
<path d="M692 182.5 L693.9 199.8 M700.5 191.5 L694 195 L702.5 199"/>
<path d="M709.2 196.8 L706.5 185.5 Q712 187 715.4 190.6 Q718 186 721 183.5 L724.6 199.6 M716.9 185.3 L726.3 187"/>
<path d="M730.4 195.5 L731.6 198.6"/>
<path d="M734 197.8 Q735 192.5 738 193 Q739.5 195 740 197.5 Q741 192 744 192.5 Q746 194 746.5 196.5 Q748 191 751 191.5 Q753 193 753.5 195"/>
<path d="M760.5 186.5 Q756 185.5 754.5 189 Q754 192.5 757.5 192 Q760.5 190.5 761 187 Q761.5 191 764 192"/>
<path d="M765.6 190.5 Q767 185 770 183.5 Q773 180.5 776 179"/>
</g>
</svg>
</body></html>
